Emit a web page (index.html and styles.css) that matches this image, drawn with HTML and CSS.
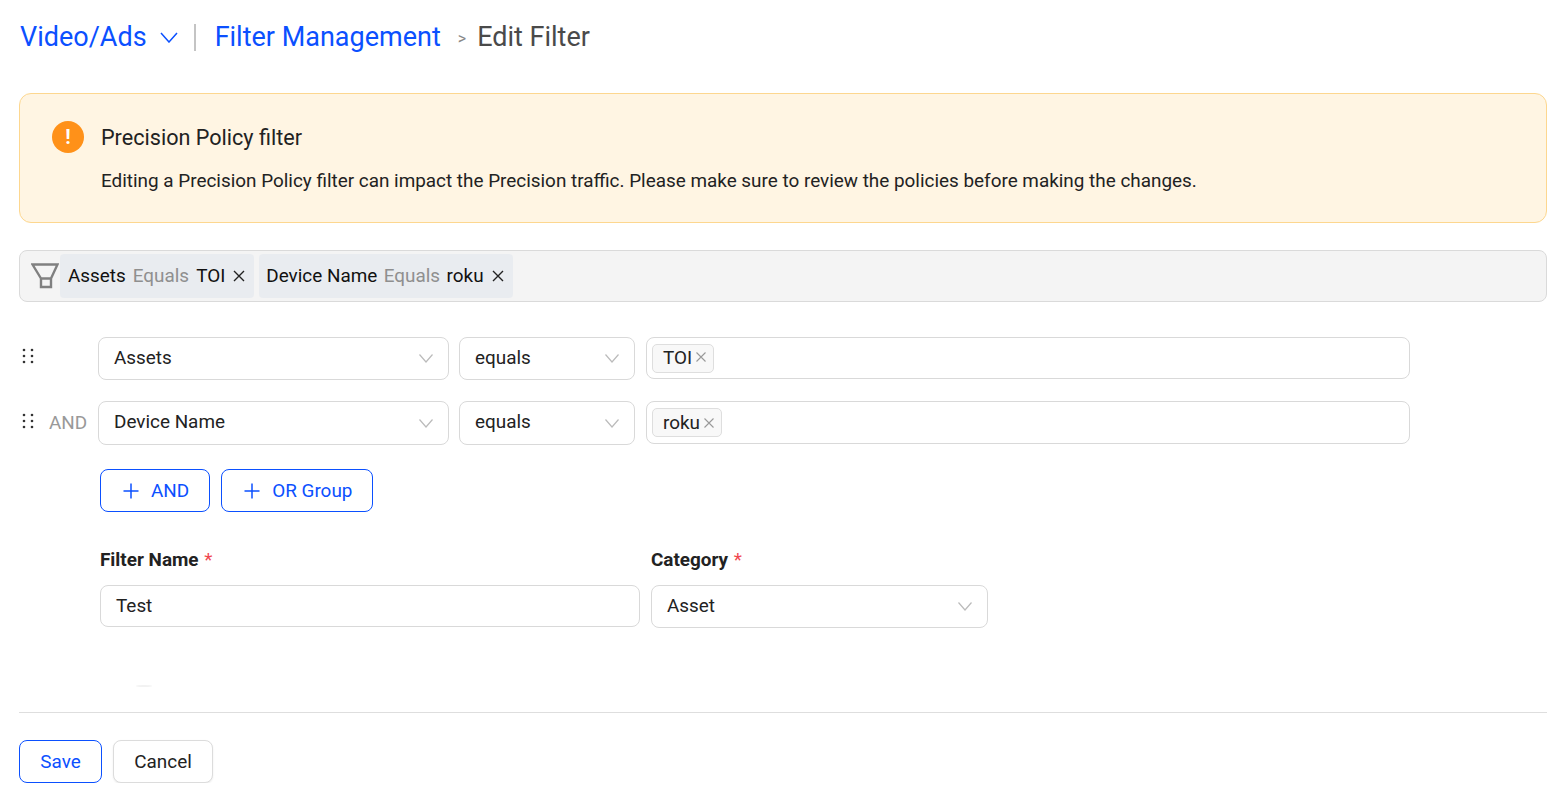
FILE: index.html
```html
<!DOCTYPE html>
<html lang="en">
<head>
    <meta charset="UTF-8">
    <meta name="viewport" content="width=device-width, initial-scale=1.0">
    <title>Edit Filter</title>
    <link rel="stylesheet" href="styles.css">
</head>
<body>
    <header class="crumbs">
        <a class="crumb-link" href="#">Video/Ads</a>
        <svg class="crumb-chevron" width="18" height="11" viewBox="0 0 18 11"><path d="M1 1l8 9 8-9" fill="none" stroke="#0b50ff" stroke-width="1.5"/></svg>
        <span class="crumb-divider"></span>
        <a class="crumb-link" href="#">Filter Management</a>
        <span class="crumb-sep">&gt;</span>
        <span class="crumb-current">Edit Filter</span>
    </header>

    <section class="alert">
        <div class="alert-head">
            <span class="alert-icon">!</span>
            <span class="alert-title">Precision Policy filter</span>
        </div>
        <p class="alert-text">Editing a Precision Policy filter can impact the Precision traffic. Please make sure to review the policies before making the changes.</p>
    </section>

    <div class="filter-bar">
        <svg class="funnel" width="28" height="26" viewBox="0 0 28 26"><path d="M1.500 1.500h25L20 15.500v8.500h-10v-8.500zM10 15.500h10" fill="none" stroke="#808080" stroke-width="2.400"/></svg>
        <div class="chip">
            <span>Assets</span><span class="chip-op">Equals</span><span>TOI</span>
            <svg class="chip-x" width="12" height="12" viewBox="0 0 12 12"><path d="M1 1l10 10M11 1L1 11" stroke="#222" stroke-width="1.4"/></svg>
        </div>
        <div class="chip">
            <span>Device Name</span><span class="chip-op">Equals</span><span>roku</span>
            <svg class="chip-x" width="12" height="12" viewBox="0 0 12 12"><path d="M1 1l10 10M11 1L1 11" stroke="#222" stroke-width="1.4"/></svg>
        </div>
    </div>

    <div class="rule first-rule">
        <svg class="grip" width="12" height="16" viewBox="0 0 12 16"><g fill="#333"><circle cx="2" cy="2" r="1.300"/><circle cx="10" cy="2" r="1.300"/><circle cx="2" cy="8" r="1.300"/><circle cx="10" cy="8" r="1.300"/><circle cx="2" cy="14" r="1.300"/><circle cx="10" cy="14" r="1.300"/></g></svg>
        <span class="rule-join"></span>
        <div class="select field-wide"><span>Assets</span><svg class="caret" width="14" height="9" viewBox="0 0 14 9"><path d="M.5.5L7 8 13.500.5" fill="none" stroke="#bbb" stroke-width="1.2"/></svg></div>
        <div class="select field-op"><span>equals</span><svg class="caret" width="14" height="9" viewBox="0 0 14 9"><path d="M.5.5L7 8 13.500.5" fill="none" stroke="#bbb" stroke-width="1.2"/></svg></div>
        <div class="tag-input">
            <span class="tag">TOI<svg class="tag-x" width="10" height="10" viewBox="0 0 10 10"><path d="M.5.5l9 9M9.500.5l-9 9" stroke="#999" stroke-width="1.1"/></svg></span>
        </div>
    </div>

    <div class="rule second-rule">
        <svg class="grip" width="12" height="16" viewBox="0 0 12 16"><g fill="#333"><circle cx="2" cy="2" r="1.300"/><circle cx="10" cy="2" r="1.300"/><circle cx="2" cy="8" r="1.300"/><circle cx="10" cy="8" r="1.300"/><circle cx="2" cy="14" r="1.300"/><circle cx="10" cy="14" r="1.300"/></g></svg>
        <span class="rule-join">AND</span>
        <div class="select field-wide"><span>Device Name</span><svg class="caret" width="14" height="9" viewBox="0 0 14 9"><path d="M.5.5L7 8 13.500.5" fill="none" stroke="#bbb" stroke-width="1.2"/></svg></div>
        <div class="select field-op"><span>equals</span><svg class="caret" width="14" height="9" viewBox="0 0 14 9"><path d="M.5.5L7 8 13.500.5" fill="none" stroke="#bbb" stroke-width="1.2"/></svg></div>
        <div class="tag-input">
            <span class="tag">roku<svg class="tag-x" width="10" height="10" viewBox="0 0 10 10"><path d="M.5.5l9 9M9.500.5l-9 9" stroke="#999" stroke-width="1.1"/></svg></span>
        </div>
    </div>

    <div class="add-row">
        <button class="btn btn-add"><svg width="16" height="16" viewBox="0 0 16 16"><path d="M8 .5v15M.5 8h15" stroke="#0b50ff" stroke-width="1.5"/></svg>AND</button>
        <button class="btn btn-add"><svg width="16" height="16" viewBox="0 0 16 16"><path d="M8 .5v15M.5 8h15" stroke="#0b50ff" stroke-width="1.5"/></svg>OR Group</button>
    </div>

    <div class="form-row">
        <div class="form-col name-col">
            <label class="form-label">Filter Name <em>*</em></label>
            <div class="text-input"><span>Test</span></div>
        </div>
        <div class="form-col category-col">
            <label class="form-label">Category <em>*</em></label>
            <div class="select category-select"><span>Asset</span><svg class="caret" width="14" height="9" viewBox="0 0 14 9"><path d="M.5.5L7 8 13.500.5" fill="none" stroke="#bbb" stroke-width="1.2"/></svg></div>
        </div>
    </div>

    <div class="smudge"></div>

    <footer class="actions">
        <button class="btn btn-save">Save</button>
        <button class="btn btn-cancel">Cancel</button>
    </footer>
</body>
</html>
```

FILE: styles.css
```css
* {
    box-sizing: border-box;
}
body {
    margin: 0;
    padding: 0 18px 0 19px;
    font-family: Roboto, sans-serif;
    font-size: 18.9px;
    color: #222;
    background-color: #fff;
}
.crumbs {
    display: flex;
    align-items: center;
    height: 73px;
    padding-left: 1px;
    font-size: 27px;
}
.crumb-link {
    color: #0b50ff;
    text-decoration: none;
}
.crumb-chevron {
    margin-left: 13px;
    margin-top: 1px;
}
.crumb-divider {
    width: 2px;
    height: 27px;
    margin: 2px 19px 0 16px;
    background-color: #c4c4c4;
}
.crumb-sep {
    margin: 3px 11px 0 17px;
    font-size: 16px;
    color: #888;
}
.crumb-current {
    color: #4a4a4a;
}
.alert {
    height: 130px;
    margin-top: 20px;
    padding: 27px 32px 0;
    background-color: #fff5e3;
    border: 1px solid #fdd78f;
    border-radius: 12px;
}
.alert-head {
    display: flex;
    align-items: center;
    height: 32px;
}
.alert-icon {
    width: 32px;
    height: 32px;
    margin-right: 17px;
    border-radius: 50%;
    background-color: #ff9119;
    color: #fff;
    font-size: 20px;
    font-weight: 700;
    line-height: 32px;
    text-align: center;
}
.alert-title {
    font-size: 21.6px;
}
.alert-text {
    margin: 14px 0 0 49px;
    line-height: 28px;
}
.filter-bar {
    display: flex;
    align-items: center;
    gap: 5px;
    height: 52px;
    margin-top: 27px;
    padding: 0 10px 0 11px;
    background-color: #f4f4f4;
    border: 1px solid #dadada;
    border-radius: 8px;
}
.funnel {
    margin-right: -4px;
    flex: none;
}
.chip {
    display: flex;
    align-items: center;
    height: 44px;
    padding: 0 9px 2px 8px;
    background-color: #e9ecf0;
    border-radius: 4px;
    color: #111;
}
.chip + .chip {
    padding-left: 7px;
}
.chip-op {
    margin: 0 7px;
    color: #8f8f8f;
}
.chip + .chip .chip-op {
    margin: 0 6.5px;
}
.chip-x {
    margin-left: 8px;
    margin-top: 2px;
}
.rule {
    display: flex;
    align-items: flex-start;
}
.first-rule {
    height: 43px;
    margin-top: 35px;
}
.second-rule {
    height: 44px;
    margin-top: 21px;
}
.grip {
    flex: none;
    margin: 12px 0 0 3px;
}
.first-rule .grip {
    margin-top: 11px;
}
.rule-join {
    width: 64px;
    padding: 11px 0 0 15px;
    flex: none;
    color: #999;
    line-height: 22px;
}
.select,
.tag-input,
.text-input {
    display: flex;
    align-items: center;
    background-color: #fff;
    border: 1px solid #d9d9d9;
    border-radius: 8px;
}
.select {
    justify-content: space-between;
    height: 100%;
    padding: 0 15px;
}
.select span,
.text-input span {
    margin-bottom: 2px;
}
.second-rule .select span {
    margin-bottom: 4px;
}
.field-wide {
    width: 351px;
    margin-right: 10px;
}
.field-op {
    width: 176px;
    margin-right: 11px;
}
.tag-input {
    width: 764px;
    height: 42px;
    padding: 0 5px;
}
.second-rule .tag-input {
    height: 43px;
}
.tag {
    display: flex;
    align-items: center;
    height: 29px;
    padding: 0 7px 0 10px;
    background-color: #f8f8f8;
    border: 1px solid #dedede;
    border-radius: 5px;
}
.first-rule .tag {
    padding-bottom: 2px;
}
.tag-x {
    margin-left: 4px;
}
.add-row {
    display: flex;
    gap: 11px;
    margin: 24px 0 0 81px;
}
.btn {
    height: 43px;
    font-family: Roboto, sans-serif;
    font-size: 18.9px;
    background-color: #fff;
    border-radius: 8px;
    cursor: pointer;
}
.btn-add {
    display: flex;
    align-items: center;
    gap: 12px;
    padding: 0 20px 0 22px;
    color: #0b50ff;
    border: 1px solid #0b50ff;
}
.form-row {
    display: flex;
    gap: 11px;
    margin: 36px 0 0 81px;
}
.form-col {
    display: flex;
    flex-direction: column;
}
.name-col {
    width: 540px;
}
.category-col {
    width: 337px;
}
.form-label {
    height: 37px;
    padding-top: 1px;
    font-weight: 700;
    line-height: 22px;
}
.form-label em {
    margin-left: 1px;
    color: #f0474f;
    font-style: normal;
    font-weight: 400;
}
.text-input {
    height: 42px;
    padding: 0 15px;
}
.category-select {
    height: 43px;
}
.smudge {
    width: 16px;
    height: 2px;
    margin: 57px 0 0 117px;
    border-radius: 50%;
    background-color: #f2f2f2;
}
.actions {
    display: flex;
    gap: 11px;
    margin-top: 25px;
    padding-top: 27px;
    border-top: 1px solid #dedede;
}
.btn-save {
    width: 83px;
    color: #0b50ff;
    border: 1px solid #0b50ff;
}
.btn-cancel {
    width: 100px;
    color: #222;
    border: 1px solid #dcdcdc;
    box-shadow: 0 1px 2px rgba(0,0,0,.08);
}
```
